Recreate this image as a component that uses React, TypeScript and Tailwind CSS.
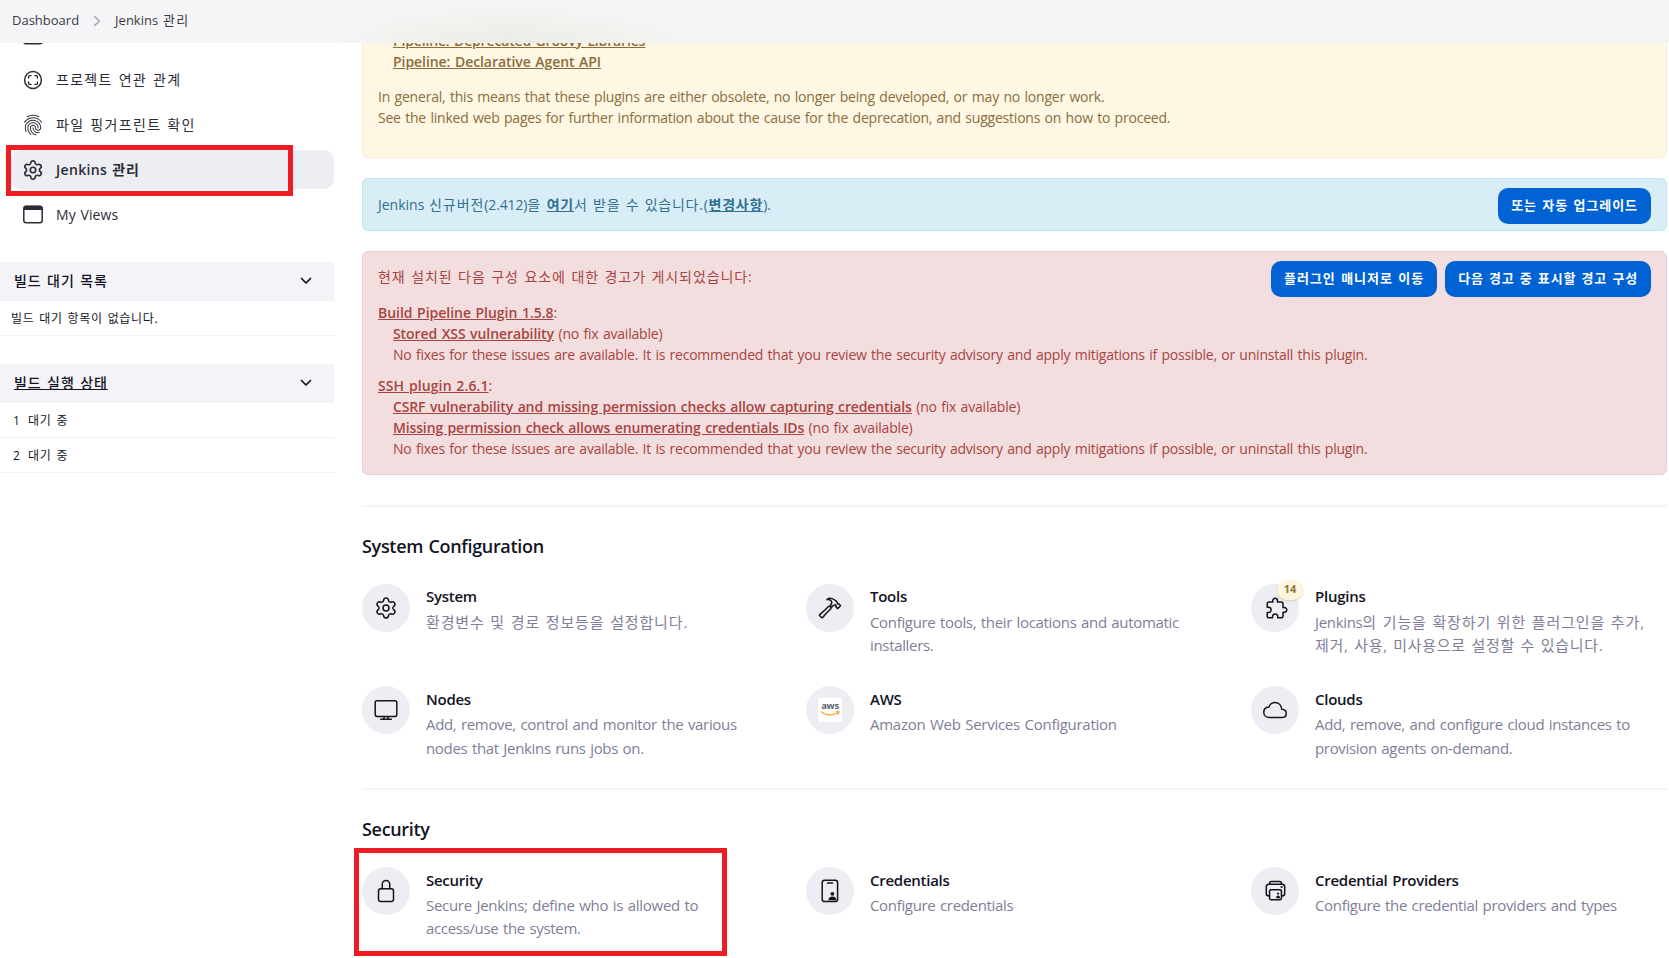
import type { ReactNode } from 'react';
import { Settings } from 'lucide-react';
import {
  IoCloudOutline,
  IoExtensionPuzzleOutline,
  IoFingerPrintOutline,
  IoHammerOutline,
  IoLockClosedOutline,
} from 'react-icons/io5';

function WindowIcon() {
  return (
    <svg viewBox="0 0 20 20" className="size-5 overflow-visible" fill="none" stroke="currentColor">
      <rect x="0.8" y="1.3" width="18.4" height="16.4" rx="2.2" strokeWidth="1.5" />
      <path d="M1 4.5V3.1A1.8 1.8 0 0 1 2.8 1.3h14.4A1.8 1.8 0 0 1 19 3.1v1.4z" fill="currentColor" strokeWidth="1" />
    </svg>
  );
}

function RelationIcon() {
  return (
    <svg viewBox="0 0 20 20" className="size-5" fill="none" stroke="currentColor" strokeWidth="1.4" strokeLinecap="round" strokeLinejoin="round">
      <circle cx="10" cy="10" r="8.4" strokeWidth="1.5" />
      <path d="M5.6 8V6.6a1 1 0 0 1 1-1H8M12 5.6h1.4a1 1 0 0 1 1 1V8M14.4 12v1.4a1 1 0 0 1-1 1H12M8 14.4H6.6a1 1 0 0 1-1-1V12" />
    </svg>
  );
}

function MonitorIcon() {
  return (
    <svg viewBox="0 0 24 24" className="size-6" fill="none" stroke="currentColor" strokeWidth="1.5" strokeLinecap="round" strokeLinejoin="round">
      <rect x="1.2" y="2.8" width="21.6" height="15.6" rx="1.8" />
      <path d="M6.7 21.2h10.6M9.8 21l.5-2.3M14.2 21l-.5-2.3" />
    </svg>
  );
}

function CredentialsIcon() {
  return (
    <svg viewBox="0 0 24 24" className="size-6" fill="none" stroke="currentColor" strokeWidth="1.5" strokeLinecap="round">
      <rect x="4.2" y="1.2" width="15.4" height="21.4" rx="2.4" />
      <path d="M9.5 4h5" />
      <circle cx="14.4" cy="14.8" r="1.9" fill="currentColor" stroke="none" />
      <path d="M10.4 21.2c0-2.4 1.8-3.6 4-3.6s4 1.2 4 3.6z" fill="currentColor" stroke="none" />
    </svg>
  );
}

function ProvidersIcon() {
  return (
    <svg viewBox="0 0 24 24" className="size-[23px]" fill="none" stroke="currentColor" strokeWidth="1.6" strokeLinejoin="round">
      <path d="M5.8 17.6H5A2.6 2.6 0 0 1 2.4 15V8A2.6 2.6 0 0 1 5 5.4h14A2.6 2.6 0 0 1 21.6 8v7a2.6 2.6 0 0 1-2.6 2.6h-.8" />
      <path d="M5.8 5.4V4.4A1.7 1.7 0 0 1 7.5 2.7h9a1.7 1.7 0 0 1 1.7 1.7v1" />
      <rect x="5.8" y="11.2" width="12.4" height="10.4" rx="1.4" />
      <circle cx="18.4" cy="8.4" r="1.1" fill="currentColor" stroke="none" />
      <circle cx="14.7" cy="15.2" r="1.2" fill="currentColor" stroke="none" />
      <path d="M12.6 20c0-1.7.9-2.7 2.1-2.7s2.1 1 2.1 2.7z" fill="currentColor" stroke="none" />
    </svg>
  );
}

function AwsLogo() {
  return (
    <span className="flex size-6 flex-col items-center bg-white pt-[3px]">
      <span className="text-[9.5px] leading-[10px] font-bold tracking-[-0.3px] text-[#5a6270]">aws</span>
      <svg viewBox="0 0 20 5" className="h-[5px] w-5" fill="none" stroke="#f7a535" strokeWidth="1.3" strokeLinecap="round">
        <path d="M1.5 1C6 4.6 13 4.8 17.5 1.7M16.3.6h2.5c.2.8-.2 1.8-.8 2.5" />
      </svg>
    </span>
  );
}

function Chevron() {
  return (
    <svg viewBox="0 0 12 8" className="h-2 w-3" fill="none" stroke="currentColor" strokeWidth="1.7" strokeLinecap="round" strokeLinejoin="round">
      <path d="M1.5 1.5 6 6l4.5-4.5" />
    </svg>
  );
}

function NavItem({ icon, active, children }: { icon: ReactNode; active?: boolean; children?: ReactNode }) {
  return (
    <div
      className={
        active
          ? 'relative flex h-[39px] items-center gap-[13px] rounded-[10px] bg-[#edeef3] pl-3 font-semibold'
          : 'flex h-[39px] items-center gap-[13px] pl-3'
      }
    >
      <span className="flex size-5 items-center justify-center">{icon}</span>
      <span>{children}</span>
      {active && <span className="absolute -top-[5px] -left-[5px] h-[51px] w-[287px] border-[5px] border-[#ee1c23]" />}
    </div>
  );
}

function PaneHeader({ children }: { children: ReactNode }) {
  return (
    <div className="flex h-[39px] items-center justify-between bg-[#f3f3f8] pr-[22px] pb-px pl-3.5 text-[14px] font-medium tracking-[0.9px]">
      <span className="pb-px">{children}</span>
      <Chevron />
    </div>
  );
}

function Card({ icon, title, children, badge, marked }: { icon: ReactNode; title: string; children: ReactNode; badge?: string; marked?: boolean }) {
  return (
    <div className="relative flex h-[73px] gap-4">
      <div className="relative flex size-12 shrink-0 items-center justify-center rounded-full bg-[#edeef3]">
        {icon}
        {badge && (
          <span className="absolute -top-1 -right-1 flex h-5 w-[26px] items-center justify-center rounded-full bg-[#fdf6dc] pb-0.5 text-[11px] font-bold text-[#8f7138] shadow-[0_1px_2px_rgba(120,100,40,0.25)]">
            {badge}
          </span>
        )}
      </div>
      <div className="pt-[0.8px] whitespace-nowrap">
        <div className="text-[15px] leading-6 font-semibold tracking-[-0.26px]">{title}</div>
        <div className="mt-[2.2px] text-[15px] leading-[23.5px] tracking-[-0.33px] text-[#7f7e98]">{children}</div>
      </div>
      {marked && <span className="absolute -top-[19px] -left-2 h-[108px] w-[373px] border-[5px] border-[#ee1c23]" />}
    </div>
  );
}

function Section({ title, children }: { title: string; children: ReactNode }) {
  return (
    <section className="border-t-2 border-[#f3f3f8] pt-[27px]">
      <h2 className="mb-[25.7px] text-[18px] leading-6 font-semibold tracking-[-0.32px]">{title}</h2>
      <div className="grid grid-cols-[444px_445px_416px] gap-y-[29.4px]">{children}</div>
    </section>
  );
}

function BlueButton({ children }: { children: ReactNode }) {
  return (
    <button className="h-9 rounded-[10px] bg-[#0062d3] px-[13px] pb-0.5 text-[13px] font-bold whitespace-nowrap text-white [word-spacing:1px]">
      {children}
    </button>
  );
}

function Strong({ children }: { children: ReactNode }) {
  return <a className="font-semibold underline">{children}</a>;
}

const ion = 'size-6';

export default function App() {
  return (
    <div className="relative h-[958px] w-[1669px] overflow-hidden bg-white font-['Open_Sans','Noto_Sans_CJK_KR',sans-serif] text-[#14141f] [word-spacing:1px]">
      <header className="absolute inset-x-0 top-0 z-10 flex h-[43px] items-center bg-[radial-gradient(170px_34px_at_510px_43px,#ecebe8,#ecebe800),linear-gradient(90deg,#f5f5f8_345px,#f4f4f2_385px)] pb-px pl-[12px] text-[13px] text-[#3a3a46]">
        <span>Dashboard</span>
        <svg viewBox="0 0 8 12" className="mr-[14px] ml-[14px] h-3 w-2" fill="none" stroke="#a3a3b5" strokeWidth="1.5" strokeLinecap="round" strokeLinejoin="round">
          <path d="m1.5 1.5 5 4.5-5 4.5" />
        </svg>
        <span className="[word-spacing:1.5px]">
          Jenkins <span className="tracking-[1.2px]">관리</span>
        </span>
      </header>

      <div className="flex">
        <aside className="w-[334px] shrink-0 pt-[15px]">
          <nav className="flex flex-col gap-1.5 pl-[11px] text-[14px] text-[#2c2c38]">
            <div className="relative top-px">
              <NavItem icon={<WindowIcon />} />
            </div>
            <NavItem icon={<RelationIcon />}>
              <span className="tracking-[1.3px]">프로젝트 연관 관계</span>
            </NavItem>
            <NavItem icon={<IoFingerPrintOutline className="size-[22px] shrink-0" />}>
              <span className="tracking-[1.32px]">파일 핑거프린트 확인</span>
            </NavItem>
            <NavItem active icon={<Settings className="size-[22px] shrink-0" strokeWidth={1.8} />}>
              <span className="tracking-[0.35px]">Jenkins </span>
              <span className="tracking-[1px]">관리</span>
            </NavItem>
            <NavItem icon={<WindowIcon />}>
              <span className="tracking-[0.1px]">My Views</span>
            </NavItem>
          </nav>

          <div className="mt-7">
            <PaneHeader>빌드 대기 목록</PaneHeader>
            <div className="flex h-[35px] items-center border-b border-[#f0f0f4] pt-0.5 pl-[11px] text-[12px] tracking-[0.7px]">빌드 대기 항목이 없습니다.</div>
          </div>
          <div className="mt-7">
            <PaneHeader>
              <a className="underline">빌드 실행 상태</a>
            </PaneHeader>
            {['1', '2'].map((n) => (
              <div key={n} className="flex h-[35px] items-center border-b border-[#f0f0f4] pt-0.5 pl-[13px] text-[12px] tracking-[0.8px]">
                <span className="w-[15px]">{n}</span>대기 중
              </div>
            ))}
          </div>
        </aside>

        <main className="ml-7 w-[1305px] shrink-0 text-[14px] leading-[21px] whitespace-nowrap">
          <div className="-mt-5 h-[178px] rounded-[6px] border border-[#faebcc] bg-[#fdf7e3] px-[15px] pt-[49px] text-[#8a6d3b]">
            <div className="pl-[15px]">
              <div className="tracking-[-0.15px]">
                <Strong>Pipeline: Deprecated Groovy Libraries</Strong>
              </div>
              <div className="tracking-[-0.06px]">
                <Strong>Pipeline: Declarative Agent API</Strong>
              </div>
            </div>
            <p className="mt-3.5 tracking-[-0.2px]">
              In general, this means that these plugins are either obsolete, no longer being developed, or may no longer work.
              <br />
              <span className="tracking-[-0.215px]">
                See the linked web pages for further information about the cause for the deprecation, and suggestions on how to proceed.
              </span>
            </p>
          </div>

          <div className="mt-5 flex h-[53px] items-start justify-between rounded-[6px] border border-[#bce8f1] bg-[#d9edf7] px-[15px] pt-[9px] text-[#31708f]">
            <p className="pt-1.5 tracking-[0.76px]">
              <span className="tracking-[0.95px]">
                <span className="tracking-normal">Jenkins </span>신규버전<span className="tracking-[-0.15px]">(2.412)</span>을{' '}
              </span>
              <Strong>여기</Strong>서 받을 수 있습니다.(
              <Strong>변경사항</Strong>
              <span className="tracking-normal">).</span>
            </p>
            <BlueButton>
              <span className="tracking-[0.95px]">또는 자동 업그레이드</span>
            </BlueButton>
          </div>

          <div className="mt-5 h-[224px] rounded-[6px] border border-[#ebccd1] bg-[#f2dede] px-[15px] pt-[9px] text-[#a94442]">
            <div className="flex h-[27px] items-start justify-between">
              <p className="pt-[5px] tracking-[0.92px]">현재 설치된 다음 구성 요소에 대한 경고가 게시되었습니다:</p>
              <div className="flex gap-2">
                <BlueButton>
                  <span className="tracking-[0.98px]">플러그인 매니저로 이동</span>
                </BlueButton>
                <BlueButton>
                  <span className="tracking-[0.85px]">다음 경고 중 표시할 경고 구성</span>
                </BlueButton>
              </div>
            </div>
            <dl className="mt-3.5">
              <dt className="tracking-[-0.03px]">
                <Strong>Build Pipeline Plugin 1.5.8</Strong>:
              </dt>
              <dd className="pl-[15px] tracking-[-0.08px]">
                <Strong>Stored XSS vulnerability</Strong> <span className="tracking-[-0.2px]">(no fix available)</span>
              </dd>
              <dd className="pl-[15px] tracking-[-0.225px]">
                No fixes for these issues are available. It is recommended that you review the security advisory and apply mitigations if possible, or uninstall this plugin.
              </dd>
              <dt className="mt-2.5 tracking-[0.1px]">
                <Strong>SSH plugin 2.6.1</Strong>:
              </dt>
              <dd className="pl-[15px] tracking-[-0.13px]">
                <Strong>CSRF vulnerability and missing permission checks allow capturing credentials</Strong>{' '}
                <span className="tracking-[-0.2px]">(no fix available)</span>
              </dd>
              <dd className="pl-[15px] tracking-[-0.14px]">
                <Strong>Missing permission check allows enumerating credentials IDs</Strong> <span className="tracking-[-0.2px]">(no fix available)</span>
              </dd>
              <dd className="pl-[15px] tracking-[-0.225px]">
                No fixes for these issues are available. It is recommended that you review the security advisory and apply mitigations if possible, or uninstall this plugin.
              </dd>
            </dl>
          </div>

          <div className="mt-[30px] flex flex-col gap-[29px]">
            <Section title="System Configuration">
              <Card title="System" icon={<Settings className="size-6" strokeWidth={1.5} />}>
                <span className="tracking-[0.85px]">환경변수 및 경로 정보등을 설정합니다.</span>
              </Card>
              <Card title="Tools" icon={<IoHammerOutline className={ion} />}>
                Configure tools, their locations and automatic
                <br />
                installers.
              </Card>
              <Card title="Plugins" badge="14" icon={<IoExtensionPuzzleOutline className="ml-[3px] size-6" />}>
                Jenkins<span className="tracking-[0.85px]">의 기능을 확장하기 위한 플러그인을 추가,</span>
                <br />
                <span className="tracking-[0.7px]">제거, 사용, 미사용으로 설정할 수 있습니다.</span>
              </Card>
              <Card title="Nodes" icon={<MonitorIcon />}>
                Add, remove, control and monitor the various
                <br />
                nodes that Jenkins runs jobs on.
              </Card>
              <Card title="AWS" icon={<AwsLogo />}>
                <span className="tracking-[-0.27px]">Amazon Web Services Configuration</span>
              </Card>
              <Card title="Clouds" icon={<IoCloudOutline className={ion} />}>
                Add, remove, and configure cloud instances to
                <br />
                provision agents on-demand.
              </Card>
            </Section>

            <Section title="Security">
              <Card title="Security" marked icon={<IoLockClosedOutline className={ion} />}>
                <span className="tracking-[-0.29px]">Secure Jenkins; define who is allowed to</span>
                <br />
                access/use the system.
              </Card>
              <Card title="Credentials" icon={<CredentialsIcon />}>
                Configure credentials
              </Card>
              <Card title="Credential Providers" icon={<ProvidersIcon />}>
                Configure the credential providers and types
              </Card>
            </Section>
          </div>
        </main>
      </div>
    </div>
  );
}
